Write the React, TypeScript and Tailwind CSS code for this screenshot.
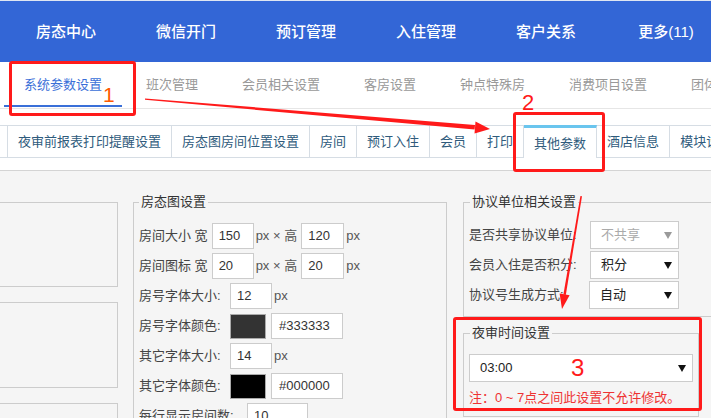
import React from 'react';

const navs = ['房态中心', '微信开门', '预订管理', '入住管理', '客户关系', '更多(11)'];
const tabs2 = ['系统参数设置', '班次管理', '会员相关设置', '客房设置', '钟点特殊房', '消费项目设置', '团体设置'];
const tabs3 = ['夜审前报表打印提醒设置', '房态图房间位置设置', '房间', '预订入住', '会员', '打印', '其他参数', '酒店信息', '模块设置'];

function Box({ w, children }: { w: string; children: React.ReactNode }) {
  return (
    <div className={`shrink-0 h-[26px] border border-[#ccc] bg-white px-[6px] flex items-center text-[13px] text-[#333] ${w}`}>
      {children}
    </div>
  );
}

function Arrow({ disabled }: { disabled?: boolean }) {
  return (
    <svg width="8" height="7" viewBox="0 0 8 7">
      <path d="M0 0H8L4 7Z" fill={disabled ? '#9a9a9a' : '#111'} />
    </svg>
  );
}

function Sel({ w, value, disabled }: { w: string; value: string; disabled?: boolean }) {
  return (
    <div className={`shrink-0 h-[28px] border border-[#ccc] bg-white pl-[10px] pr-[6px] flex items-center justify-between text-[13px] ${disabled ? 'text-[#aaa]' : 'text-[#222]'} ${w}`}>
      <span>{value}</span>
      <Arrow disabled={disabled} />
    </div>
  );
}

export default function App() {
  return (
    <div className="relative w-[711px] h-[418px] overflow-hidden bg-white font-['Liberation_Sans','Noto_Sans_CJK_SC',sans-serif]">
      {/* top nav */}
      <div className="h-[62px] bg-[#3366d6] border-t border-[#dfe6f2] flex pl-[6px]">
        {navs.map((n) => (
          <div key={n} className="shrink-0 w-[120px] flex items-center justify-center pt-[2px] text-white text-[15px] font-medium">
            {n}
          </div>
        ))}
      </div>

      {/* second tabs */}
      <div className="h-[47px] border-b border-[#e6e6e6] flex pl-[2px] whitespace-nowrap">
        {tabs2.map((t, i) => (
          <div
            key={t}
            className={`shrink-0 relative px-[22px] flex items-center text-[13px] ${i === 0 ? 'text-[#3a6fd8]' : 'text-[#999]'}`}
          >
            {t}
            {i === 0 && <div className="absolute left-[2px] right-[2px] bottom-[1px] h-[2px] bg-[#3a6fd8]" />}
          </div>
        ))}
      </div>

      <div className="h-[16px]" />

      {/* third tabs */}
      <div className="h-[33px] border-y border-[#d6dde4] flex whitespace-nowrap">
        <div className="shrink-0 w-[8px] border-r border-[#d6dde4]" />
        {tabs3.map((t) =>
          t === '其他参数' ? (
            <div
              key={t}
              className="shrink-0 -my-[1px] px-[10px] border-r border-[#d6dde4] border-t-[3px] border-t-[#6ac5ee] bg-white flex items-center pt-[1px] text-[13px] text-[#2f5b7c]"
            >
              {t}
            </div>
          ) : (
            <div key={t} className="shrink-0 px-[10px] border-r border-[#d6dde4] flex items-center text-[13px] text-[#2f5b7c]">
              {t}
            </div>
          )
        )}
      </div>

      <div className="h-[13px] border-b border-[#d4d4d4]" />

      {/* content */}
      <div className="bg-[#f5f5f5] h-[260px] flex items-start pt-[22px]">
        {/* left column */}
        <div className="shrink-0 w-[118px] pt-[9px] flex flex-col gap-[15px]">
          <div className="h-[85px] border-y border-r border-[#ccc]" />
          <div className="h-[86px] border-y border-r border-[#ccc]" />
          <div className="h-[86px] border-y border-r border-[#ccc]" />
        </div>

        {/* middle */}
        <fieldset className="shrink-0 ml-[15px] w-[314px] h-[260px] border border-[#ccc] px-[5px]">
          <legend className="px-[2px] text-[13px] leading-[18px] text-[#333]">房态图设置</legend>
          <div className="pt-[10px] text-[13px] text-[#444] whitespace-nowrap">
            <div className="h-[30px] flex items-center">
              <span className="shrink-0">房间大小 宽</span>
              <Box w="ml-[4px] w-[42px]">150</Box>
              <span className="shrink-0 ml-[2px] text-[#555]">px × 高</span>
              <Box w="ml-[4px] w-[43px]">120</Box>
              <span className="shrink-0 ml-[2px] text-[#555]">px</span>
            </div>
            <div className="h-[30px] flex items-center">
              <span className="shrink-0">房间图标 宽</span>
              <Box w="ml-[4px] w-[42px]">20</Box>
              <span className="shrink-0 ml-[2px] text-[#555]">px × 高</span>
              <Box w="ml-[4px] w-[43px]">20</Box>
              <span className="shrink-0 ml-[2px] text-[#555]">px</span>
            </div>
            <div className="h-[30px] flex items-center">
              <span className="shrink-0 w-[91px]">房号字体大小:</span>
              <Box w="w-[42px]">12</Box>
              <span className="shrink-0 ml-[2px] text-[#555]">px</span>
            </div>
            <div className="h-[30px] flex items-center">
              <span className="shrink-0 w-[91px]">房号字体颜色:</span>
              <div className="shrink-0 w-[36px] h-[25px] border border-[#aaa] bg-[#333333]" />
              <Box w="ml-[5px] w-[72px] pl-[7px]">#333333</Box>
            </div>
            <div className="h-[30px] flex items-center">
              <span className="shrink-0 w-[91px]">其它字体大小:</span>
              <Box w="w-[42px]">14</Box>
              <span className="shrink-0 ml-[2px] text-[#555]">px</span>
            </div>
            <div className="h-[30px] flex items-center">
              <span className="shrink-0 w-[91px]">其它字体颜色:</span>
              <div className="shrink-0 w-[36px] h-[25px] border border-[#aaa] bg-black" />
              <Box w="ml-[5px] w-[72px] pl-[7px]">#000000</Box>
            </div>
            <div className="h-[30px] flex items-center">
              <span className="shrink-0 w-[108px]">每行显示房间数:</span>
              <Box w="w-[61px]">10</Box>
            </div>
          </div>
        </fieldset>

        {/* right */}
        <div className="shrink-0 ml-[16px] flex flex-col">
          <fieldset className="w-[260px] border border-[#ccc] px-[5px] pb-[6px]">
            <legend className="ml-[1px] px-[2px] text-[13px] leading-[18px] text-[#333]">协议单位相关设置</legend>
            <div className="pt-[9px] text-[13px] text-[#444] whitespace-nowrap">
              <div className="h-[30px] flex items-center">
                <span className="shrink-0 w-[121px]">是否共享协议单位:</span>
                <Sel w="w-[89px]" value="不共享" disabled />
              </div>
              <div className="h-[30px] flex items-center">
                <span className="shrink-0 w-[121px]">会员入住是否积分:</span>
                <Sel w="w-[89px]" value="积分" />
              </div>
              <div className="h-[30px] flex items-center">
                <span className="shrink-0 w-[120px]">协议号生成方式:</span>
                <Sel w="w-[90px]" value="自动" />
              </div>
            </div>
          </fieldset>
          <fieldset className="mt-[7px] w-[236px] border border-[#ccc] px-[5px] pb-[9px]">
            <legend className="ml-[1px] px-[2px] text-[13px] leading-[18px] text-[#333]">夜审时间设置</legend>
            <div className="pt-[12px]">
              <Sel w="w-[224px]" value="03:00" />
              <div className="mt-[7px] text-[13px] leading-[18px] text-[#ee3333] whitespace-nowrap">注：0 ~ 7点之间此设置不允许修改。</div>
            </div>
          </fieldset>
        </div>
      </div>

      {/* annotations */}
      <div className="absolute left-[9px] top-[61px] w-[127px] h-[55px] border-[3px] border-[#ff1a1a] rounded-[3px]" />
      <div className="absolute left-[513px] top-[112px] w-[92px] h-[60px] border-[3px] border-[#ff1a1a] rounded-[3px]" />
      <div className="absolute left-[453px] top-[317px] w-[249px] h-[94px] border-[3px] border-[#ff1a1a] rounded-[3px]" />
      <div className="absolute left-[103px] top-[84px] text-[21px] leading-[21px] text-[#ff5a00]">1</div>
      <div className="absolute left-[522px] top-[92px] text-[22px] leading-[22px] text-[#ff1a1a]">2</div>
      <div className="absolute left-[571px] top-[356px] text-[24px] leading-[24px] text-[#ff1a1a]">3</div>
      <svg className="absolute inset-0 pointer-events-none" width="711" height="418" viewBox="0 0 711 418">
        <polygon points="145,98.4 475,125 474.6,129.6 145,99.8" fill="#ff1a1a" />
        <polygon points="490,129 474.5,133.5 475.5,121.5" fill="#ff1a1a" />
        <polygon points="580.4,196 582,196.3 565.8,295 563.4,294.6" fill="#ff1a1a" />
        <polygon points="562,309 569.6,295.2 559.6,293.5" fill="#ff1a1a" />
      </svg>
    </div>
  );
}
